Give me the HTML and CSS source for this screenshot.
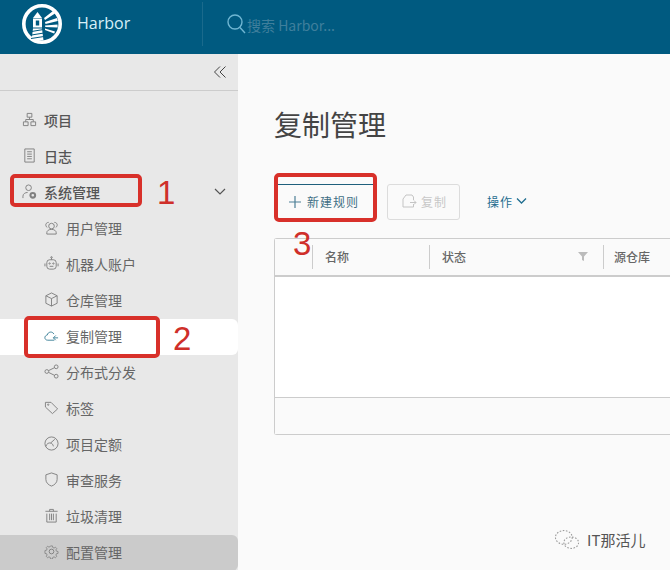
FILE: index.html
```html
<!DOCTYPE html>
<html lang="zh-CN">

<head>
    <meta charset="UTF-8">
    <meta name="viewport" content="width=device-width, initial-scale=1.0">
    <title>Harbor</title>
    <link rel="stylesheet" href="styles.css">
</head>

<body>
    <header class="topbar">
        <div class="brand">
            <svg class="logo" width="42" height="42" viewBox="0 0 42 42" fill="none">
                <circle cx="21" cy="21" r="18.200" stroke="#fff" stroke-width="3.600" />
                <path d="M12 15l4.500-6 4.500 6z" fill="#fff" />
                <path d="M12 15.500h9v9h-9z" fill="#fff" />
                <path d="M14.800 17.500h3.400v5h-3.400z" fill="#005a80" />
                <path d="M12 25.500h9l1.500 12h-12z" fill="#fff" />
                <path d="M10.500 28.500l12-2M10.500 32l12.500-2M10 35.500l13-2" stroke="#005a80" stroke-width="1" />
                <path d="M23 15l9-7 2 2.500-10 6.500zM24 19l12-4 .8 3-12.300 3zM24 22.500l12.500-1 .2 3-12.400-.5zM24 25.500l10 3-.8 2-9.200-3.500z" fill="#fff" />
            </svg>
            <span class="brand-name">Harbor</span>
        </div>
        <div class="search">
            <svg width="20" height="20" viewBox="0 0 20 20" fill="none" stroke="#6fb6d2" stroke-width="1.400">
                <circle cx="8" cy="8" r="7" />
                <path d="M13 13.500l5 5.500" />
            </svg>
            <span class="search-text">搜索 Harbor...</span>
        </div>
    </header>

    <div class="layout">
        <aside class="sidebar">
            <div class="collapse-row">
                <svg width="14" height="14" viewBox="0 0 14 14" fill="none" stroke="#444" stroke-width="1">
                    <path d="M7 1.500L1.500 7 7 12.500M12.500 1.500L7 7l5.500 5.500" />
                </svg>
            </div>
            <ul class="nav">
                <li class="nav-item top">
                    <svg class="icon" viewBox="0 0 16 16"><path d="M5.500 1.500h5v4h-5zM1.500 10.500h5v4h-5zM9.500 10.500h5v4h-5zM4 10.500V8h8v2.500M8 5.500V8" /></svg>
                    项目
                </li>
                <li class="nav-item top">
                    <svg class="icon" viewBox="0 0 16 16"><path d="M3 1h10v14H3zM5.500 4h5M5.500 6.500h5M5.500 9h5M5.500 11.500h5" /></svg>
                    日志
                </li>
                <li class="nav-item top">
                    <svg class="icon" viewBox="0 0 16 16"><circle cx="7" cy="4" r="3" /><path d="M1 15v-2c0-2.500 2.500-4 5-4" /><circle cx="11.500" cy="12" r="2.500" stroke-width="2.200" /></svg>
                    系统管理
                    <svg class="chevron" width="14" height="10" viewBox="0 0 14 10" fill="none" stroke="#555" stroke-width="1.200"><path d="M2 2l5 5 5-5" /></svg>
                </li>
                <li class="nav-item sub">
                    <svg class="icon" viewBox="0 0 16 16"><circle cx="8" cy="6.500" r="3" /><path d="M3 15v-1.500c0-2 2-3.500 5-3.500s5 1.500 5 3.500V15zM5 2.500C3 2.500 1.500 4 2 6c.2 1 .8 1.500 1.500 2M11 2.500c2 0 3.500 1.500 3 3.500-.2 1-.8 1.500-1.500 2" /></svg>
                    用户管理
                </li>
                <li class="nav-item sub">
                    <svg class="icon" viewBox="0 0 16 16"><rect x="3" y="4" width="10" height="10" rx="3" /><circle cx="6" cy="8" r=".7" /><circle cx="10" cy="8" r=".7" /><path d="M6 11h4M8 4V2M1 8v3M15 8v3" /><circle cx="8" cy="1.500" r=".8" /></svg>
                    机器人账户
                </li>
                <li class="nav-item sub">
                    <svg class="icon" viewBox="0 0 16 16"><path d="M8 1l6 3v8l-6 3-6-3V4zM2 4l6 3 6-3M8 7v8" /></svg>
                    仓库管理
                </li>
                <li class="nav-item sub active">
                    <svg class="icon" viewBox="0 0 16 16"><path d="M11 13H4c-4 0-4-5-.5-5.500C4 4 9 3 10.500 6.500M10 10.500h5M12.500 8l-2.500 2.500 2.500 2.500" /></svg>
                    复制管理
                </li>
                <li class="nav-item sub">
                    <svg class="icon" viewBox="0 0 16 16"><circle cx="3" cy="8" r="2" /><circle cx="13" cy="3" r="2" /><circle cx="13" cy="13" r="2" /><path d="M5 7l6-3M5 9l6 3" /></svg>
                    分布式分发
                </li>
                <li class="nav-item sub">
                    <svg class="icon" viewBox="0 0 16 16"><path d="M1.500 2.500h6l7 7-5.500 5-7.500-7z" /><circle cx="4.500" cy="5" r=".7" /></svg>
                    标签
                </li>
                <li class="nav-item sub">
                    <svg class="icon" viewBox="0 0 16 16"><circle cx="8" cy="8" r="7" /><path d="M2 11c1-3 3-4 5-3.500L11.500 3.500M7 7.500C9 8 9.500 9 10 11" /></svg>
                    项目定额
                </li>
                <li class="nav-item sub">
                    <svg class="icon" viewBox="0 0 16 16"><path d="M8 1l6 2v5c0 3.500-3 6-6 7-3-1-6-3.500-6-7V3z" /></svg>
                    审查服务
                </li>
                <li class="nav-item sub">
                    <svg class="icon" viewBox="0 0 16 16"><path d="M1.500 3.500h13M6 3.500V1.500h4v2M3 6v9h10V6M6 6v7M8 6v7M10 6v7" /></svg>
                    垃圾清理
                </li>
                <li class="nav-item sub current">
                    <svg class="icon" viewBox="0 0 16 16"><circle cx="8" cy="8" r="2.500" /><path d="M6.800 1h2.400l.4 2 1.600.7 1.700-1.100 1.700 1.700-1.100 1.700.7 1.600 2 .4v2.400l-2 .4-.7 1.600 1.100 1.700-1.700 1.700-1.700-1.100-1.600.7-.4 2H6.800l-.4-2-1.600-.7-1.700 1.100-1.700-1.700 1.100-1.700-.7-1.600-2-.4V6.800l2-.4.7-1.600-1.100-1.700 1.700-1.700 1.700 1.100 1.600-.7z" transform="translate(1.200 1.200) scale(.85)" /></svg>
                    配置管理
                </li>
            </ul>
        </aside>

        <main class="content">
            <h1 class="title">复制管理</h1>
            <div class="toolbar">
                <button class="btn btn-new">
                    <svg width="12" height="12" viewBox="0 0 12 12" stroke="#4d7f96" stroke-width="1.200"><path d="M6 0v12M0 6h12" /></svg>
                    新建规则
                </button>
                <button class="btn btn-copy">
                    <svg width="15" height="14" viewBox="0 0 15 14" fill="none" stroke="#c4c4c4"><path d="M1 5l3-4h6l1.500 2v3M11.500 10v3H1V5M8 8.500h6M12 6.500l2 2-2 2" /></svg>
                    复制
                </button>
                <button class="btn btn-action">
                    操作
                    <svg width="11" height="8" viewBox="0 0 11 8" fill="none" stroke="#1f6d8f" stroke-width="1.300"><path d="M1 1.500l4.500 4.500L10 1.500" /></svg>
                </button>
            </div>
            <div class="grid">
                <div class="grid-head">
                    <div class="cell cell-check"></div>
                    <div class="cell cell-name">名称</div>
                    <div class="cell cell-status">
                        状态
                        <svg width="10" height="10" viewBox="0 0 10 10" fill="#bbb"><path d="M0 1h10L6 5.500V10L4 9V5.500z" /></svg>
                    </div>
                    <div class="cell cell-source">源仓库</div>
                </div>
                <div class="grid-body"></div>
                <div class="grid-foot"></div>
            </div>
        </main>
    </div>

    <!-- 截图上的红色标注 -->
    <div class="mark mark-box1"></div>
    <div class="mark-num num1">1</div>
    <div class="mark mark-box2"></div>
    <div class="mark-num num2">2</div>
    <div class="mark mark-box3"></div>
    <div class="mark-num num3">3</div>

    <div class="watermark">
        <svg width="26" height="21" viewBox="0 0 24 20" fill="none" stroke="#9a9a9a" stroke-dasharray="1.500 1.500">
            <ellipse cx="9" cy="8" rx="8" ry="6.500" />
            <ellipse cx="16" cy="13" rx="7" ry="5.500" />
        </svg>
        <span>IT那活儿</span>
    </div>
</body>

</html>
```

FILE: styles.css
```css
* {
    padding: 0;
    margin: 0;
    list-style: none;
    box-sizing: border-box;
}

body {
    width: 670px;
    height: 570px;
    overflow: hidden;
    position: relative;
    background-color: #fafafa;
    font-family: "Noto Sans CJK SC", "Liberation Sans", sans-serif;
}

.topbar {
    height: 54px;
    display: flex;
    align-items: center;
    padding-bottom: 6px;
    background-color: #005a80;
}

.brand {
    width: 203px;
    height: 44px;
    display: flex;
    align-items: center;
    padding-left: 21px;
    border-right: 1px solid #1a6a8c;
}

.brand-name {
    margin: 0 0 2px 14px;
    font-family: "Open Sans", "Liberation Sans", sans-serif;
    font-size: 16px;
    color: #d8f0f8;
}

.search {
    display: flex;
    align-items: center;
    margin-left: 24px;
}

.search-text {
    margin-top: 2px;
    font-size: 14px;
    color: #3f7f9c;
}

.layout {
    height: 516px;
    display: flex;
}

.sidebar {
    width: 238px;
    flex-shrink: 0;
    background-color: #e8e8e8;
}

.collapse-row {
    height: 37px;
    display: flex;
    align-items: center;
    justify-content: flex-end;
    padding: 0 11px 1px 0;
    border-bottom: 1px solid #ccc;
}

.nav {
    padding-top: 12px;
}

.nav-item {
    height: 36px;
    display: flex;
    align-items: center;
    padding-bottom: 3px;
    font-size: 14px;
    color: #666;
}

.nav-item.top {
    padding-left: 22px;
    font-weight: 500;
    color: #555;
}

.nav-item.sub {
    padding-left: 44px;
}

.icon {
    width: 15px;
    height: 15px;
    margin-right: 7px;
    flex-shrink: 0;
    fill: none;
    stroke: #808080;
    stroke-width: 1;
}

.chevron {
    margin-left: auto;
    margin-right: 11px;
}

.nav-item.active {
    background-color: #fff;
    border-radius: 0 6px 6px 0;
}

.nav-item.active .icon {
    stroke: #3d8199;
}

.nav-item.current {
    background-color: #cbcbcb;
    border-radius: 0 6px 6px 0;
}

.content {
    flex: 1;
    padding: 50px 0 0 36px;
    overflow: hidden;
}

.title {
    font-size: 28px;
    line-height: 40px;
    font-weight: 400;
    color: #444;
}

.toolbar {
    display: flex;
    align-items: center;
    margin-top: 40px;
    height: 36px;
}

.btn {
    display: flex;
    align-items: center;
    padding-bottom: 2px;
    background: none;
    border: 0;
    font-family: inherit;
    font-size: 12px;
    letter-spacing: 1px;
}

.btn-new {
    width: 101px;
    height: 36px;
    padding-left: 13px;
    gap: 6px;
    color: #3f6f85;
    border-top: 1px solid #1f5f7c;
    margin-left: 2px;
}

.btn-copy {
    width: 73px;
    height: 36px;
    margin-left: 10px;
    padding-left: 14px;
    gap: 4px;
    color: #c8c8c8;
    border: 1px solid #dcdcdc;
    border-radius: 3px;
}

.btn-action {
    margin-left: 27px;
    gap: 3px;
    color: #1f6d8f;
}

.grid {
    width: 420px;
    height: 197px;
    margin-top: 18px;
    background-color: #fff;
    border: 1px solid #ccc;
    border-right: 0;
    border-radius: 3px 0 0 3px;
    display: flex;
    flex-direction: column;
}

.grid-head {
    height: 38px;
    display: flex;
    align-items: center;
    background-color: #fafafa;
    border-bottom: 2px solid #ccc;
}

.cell {
    height: 24px;
    display: flex;
    align-items: center;
    padding: 0 0 2px 12px;
    font-size: 12px;
    font-weight: 500;
    color: #666;
    border-right: 1px solid #ccc;
}

.cell-check {
    width: 38px;
}

.cell-name {
    width: 117px;
}

.cell-status {
    width: 174px;
    padding-right: 15px;
    justify-content: space-between;
}

.cell-source {
    flex: 1;
    padding-left: 10px;
    border-right: 0;
}

.grid-body {
    flex: 1;
    border-bottom: 1px solid #ccc;
}

.grid-foot {
    height: 36px;
    background-color: #fafafa;
}

/* 红框标注 */
.mark {
    position: absolute;
    border: 4px solid #d8302a;
    border-radius: 5px;
}

.mark-box1 {
    left: 10px;
    top: 174px;
    width: 132px;
    height: 33px;
}

.mark-box2 {
    left: 24px;
    top: 316px;
    width: 136px;
    height: 42px;
}

.mark-box3 {
    left: 274px;
    top: 173px;
    width: 103px;
    height: 49px;
}

.mark-num {
    position: absolute;
    font-family: "Liberation Sans", sans-serif;
    font-size: 33px;
    line-height: 36px;
    color: #cf2f2a;
}

.num1 {
    left: 157px;
    top: 175px;
}

.num2 {
    left: 173px;
    top: 321px;
}

.num3 {
    left: 293px;
    top: 226px;
}

.watermark {
    position: absolute;
    left: 554px;
    top: 529px;
    display: flex;
    align-items: center;
    gap: 7px;
    font-size: 15px;
    color: #555;
}
```
